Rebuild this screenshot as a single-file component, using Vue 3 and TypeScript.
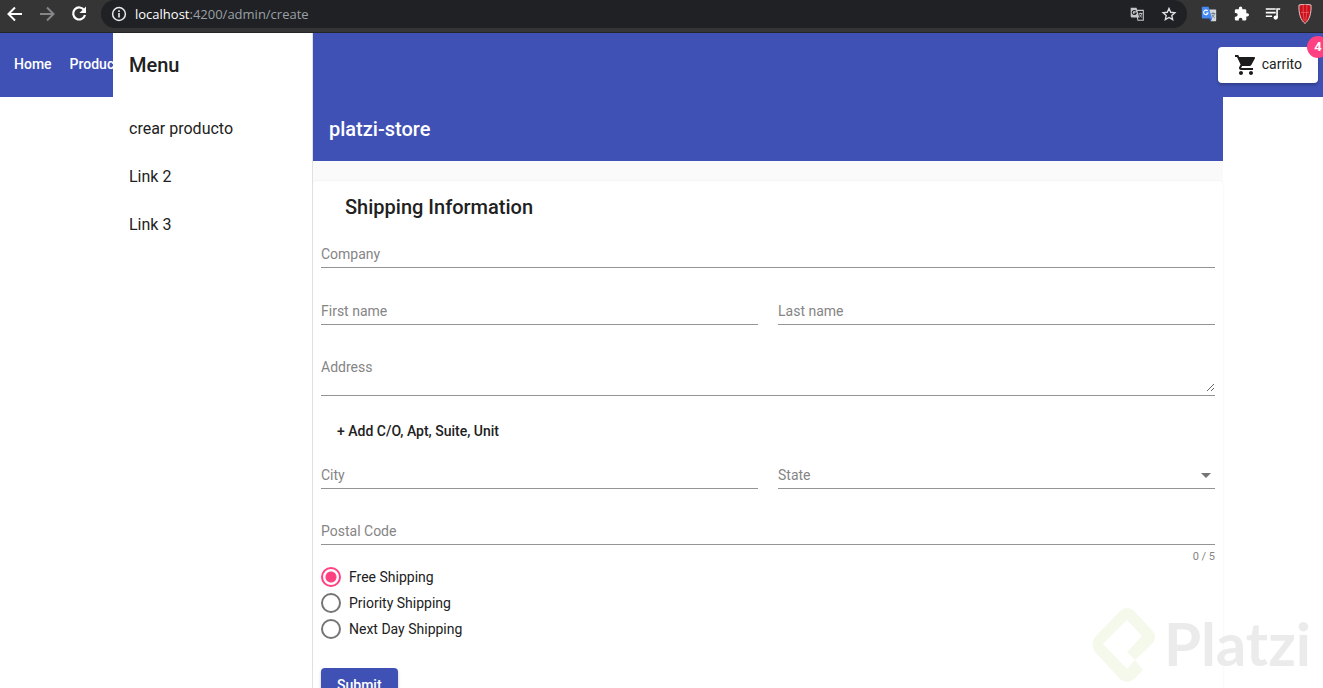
<script setup lang="ts">
import { ref } from 'vue'

interface LinkItem {
  label: string
  href: string
}

const navLinks: LinkItem[] = [
  { label: 'Home', href: '#/home' },
  { label: 'Products', href: '#/products' },
]
const menuLinks: LinkItem[] = [
  { label: 'crear producto', href: '#/admin/create' },
  { label: 'Link 2', href: '#/link-2' },
  { label: 'Link 3', href: '#/link-3' },
]
const shippingOptions: string[] = ['Free Shipping', 'Priority Shipping', 'Next Day Shipping']
const states: string[] = ['Alabama', 'Alaska', 'Arizona', 'California']

const company = ref('')
const firstName = ref('')
const lastName = ref('')
const address = ref('')
const city = ref('')
const state = ref('')
const postalCode = ref('')
const shipping = ref('Free Shipping')
const cartCount = ref(4)
</script>

<template>
  <div class="window">
    <div class="browser">
      <button class="tool" aria-label="Back">
        <svg viewBox="0 0 20 20"><path d="M17 10H4M10 3.500L3.500 10l6.500 6.500" fill="none" stroke="#fff" stroke-width="2" /></svg>
      </button>
      <button class="tool" aria-label="Forward">
        <svg viewBox="0 0 20 20"><path d="M3 10h13M10 3.500l6.500 6.500-6.500 6.500" fill="none" stroke="#85868a" stroke-width="2" /></svg>
      </button>
      <button class="tool" aria-label="Reload">
        <svg viewBox="0 0 20 20"><path d="M15.300 6.300A6 6 0 1 0 16 11" fill="none" stroke="#fff" stroke-width="2.200" /><path d="M17 2.500V9h-6.500z" fill="#fff" /></svg>
      </button>
      <div class="omnibox">
        <svg class="info" viewBox="0 0 16 16"><circle cx="8" cy="8" r="6.400" fill="none" stroke="#e8eaed" stroke-width="1.500" /><path d="M7.200 7h1.600v4.500H7.200zM7.200 4.300h1.600v1.600H7.200z" fill="#e8eaed" /></svg>
        <p class="url"><span>localhost</span>:4200/admin/create</p>
        <button class="tool" aria-label="Translate this page">
          <svg viewBox="0 0 20 20"><path d="M9 6h8v11h-6z" fill="none" stroke="#c4c7ca" stroke-width="1.200" /><path d="M3 3h6.500l3 11H4.500A1.500 1.500 0 0 1 3 12.500z" fill="#c4c7ca" /><path d="M8.800 6.900A2.300 2.300 0 1 0 9.200 9H7" fill="none" stroke="#202124" stroke-width="1.200" /><path d="M12 9.500h4M14 8.500v1M15.300 9.500c-.4 2-1.500 3.300-2.500 4M12.800 10.500c.5 1.500 1.500 2.500 2.700 3.300" fill="none" stroke="#c4c7ca" /></svg>
        </button>
        <button class="tool" aria-label="Bookmark this page">
          <svg viewBox="0 0 20 20"><path d="M10 3.800l1.900 4.300 4.700.5-3.500 3.100 1 4.600-4.100-2.400-4.100 2.400 1-4.600-3.500-3.100 4.700-.5z" fill="none" stroke="#dee1e6" stroke-width="1.500" /></svg>
        </button>
      </div>
      <div class="extensions">
        <button class="tool" aria-label="Translate">
          <svg viewBox="0 0 20 20"><path d="M9 5h8a1 1 0 0 1 1 1v11a1 1 0 0 1-1 1h-5z" fill="#d5d8dc" /><path d="M3 2h6.500l4 13H3a1 1 0 0 1-1-1V3a1 1 0 0 1 1-1z" fill="#4688f1" /><path d="M9.500 15h4L12 18z" fill="#2a56c6" /><path d="M8.600 6.700A2.500 2.500 0 1 0 9 8.800H6.800" fill="none" stroke="#fff" stroke-width="1.200" /><path d="M12.500 9.500h4.500M14.500 8v1.500M16 9.500c-.4 2-1.300 3.200-2.300 4M13.500 10.800c.6 1.500 1.600 2.700 3 3.700" fill="none" stroke="#607988" /></svg>
        </button>
        <button class="tool" aria-label="Extensions">
          <svg viewBox="0 0 24 24"><path d="M20.500 11H19V7a2 2 0 0 0-2-2h-4V3.500a2.500 2.500 0 0 0-5 0V5H4a2 2 0 0 0-2 2v3.800h1.500a2.700 2.700 0 0 1 0 5.400H2V20a2 2 0 0 0 2 2h3.800v-1.500a2.700 2.700 0 0 1 5.400 0V22H17a2 2 0 0 0 2-2v-4h1.500a2.500 2.500 0 0 0 0-5z" fill="#fff" transform="translate(2 1) scale(.9)" /></svg>
        </button>
        <button class="tool" aria-label="Media controls">
          <svg viewBox="0 0 20 20"><path d="M2 4.500h11M2 8.500h11M2 12.500h7M14.500 14V4.500H18" fill="none" stroke="#fff" stroke-width="1.800" /><circle cx="13" cy="14" r="2.400" fill="#fff" /></svg>
        </button>
        <button class="tool" aria-label="Shield">
          <svg class="shield" viewBox="0 0 20 20"><path d="M4 1Q10-1 16 1C16.500 9 14.500 16 10 19.500 5.500 16 3.500 9 4 1z" fill="#cc0f18" stroke="#dccaca" /><path d="M8.200 1v7l1 9M11.800 1v7l-1 9M6 8.500h8" fill="none" stroke="#e4616a" stroke-width=".8" /></svg>
        </button>
      </div>
    </div>

    <div class="app">
      <header class="topbar">
        <nav class="links" aria-label="Main">
          <a v-for="link in navLinks" :key="link.label" :href="link.href">{{ link.label }}</a>
        </nav>
        <button class="cart">
          <svg viewBox="0 0 24 24"><path d="M7 18c-1.100 0-1.990.9-1.990 2S5.900 22 7 22s2-.9 2-2-.9-2-2-2zM1 2v2h2l3.600 7.590-1.350 2.450c-.16.28-.25.61-.25.96 0 1.100.9 2 2 2h12v-2H7.420c-.14 0-.25-.11-.25-.25l.03-.12.900-1.630h7.450c.75 0 1.410-.41 1.750-1.030l3.580-6.490c.08-.14.120-.31.120-.48 0-.55-.45-1-1-1H5.210l-.94-2H1zm16 16c-1.100 0-1.990.9-1.990 2s.89 2 1.990 2 2-.9 2-2-.9-2-2-2z" fill="#1c1c1c" /></svg>
          <span class="cart-label">carrito</span>
          <span class="badge">{{ cartCount }}</span>
        </button>
      </header>

      <aside class="drawer">
        <h2>Menu</h2>
        <nav aria-label="Menu">
          <a v-for="link in menuLinks" :key="link.label" :href="link.href">{{ link.label }}</a>
        </nav>
      </aside>

      <main class="content">
        <h1>platzi-store</h1>
        <form class="card" @submit.prevent>
          <h2>Shipping Information</h2>
          <label class="field">
            <input v-model="company" type="text" />
            <span :class="{ floating: company }">Company</span>
          </label>
          <div class="pair">
            <label class="field">
              <input v-model="firstName" type="text" />
              <span :class="{ floating: firstName }">First name</span>
            </label>
            <label class="field">
              <input v-model="lastName" type="text" />
              <span :class="{ floating: lastName }">Last name</span>
            </label>
          </div>
          <label class="field area">
            <textarea v-model="address"></textarea>
            <span :class="{ floating: address }">Address</span>
          </label>
          <button type="button" class="add">+ Add C/O, Apt, Suite, Unit</button>
          <div class="pair">
            <label class="field">
              <input v-model="city" type="text" />
              <span :class="{ floating: city }">City</span>
            </label>
            <label class="field">
              <select v-model="state">
                <option value=""></option>
                <option v-for="name in states" :key="name" :value="name">{{ name }}</option>
              </select>
              <span :class="{ floating: state }">State</span>
              <i class="arrow"></i>
            </label>
          </div>
          <label class="field postal">
            <input v-model="postalCode" type="text" maxlength="5" />
            <span :class="{ floating: postalCode }">Postal Code</span>
          </label>
          <p class="hint">{{ postalCode.length }} / 5</p>
          <div class="radios" role="radiogroup" aria-label="Shipping method">
            <label v-for="option in shippingOptions" :key="option">
              <input v-model="shipping" type="radio" name="shipping" :value="option" />
              {{ option }}
            </label>
          </div>
          <button type="submit" class="submit">Submit</button>
        </form>
      </main>
    </div>

    <div class="brand">
      <svg viewBox="0 0 64 74"><path fill-rule="evenodd" d="M28 3Q35-3 42 3L60 22Q66 29 60 36L43 52 51 62 42 71Q35 77 28 71L3 44Q-2 37 3 29ZM35 12 11 36 35 61 43 52 35 44 50 28Z" /></svg>
      <span>Platzi</span>
    </div>
  </div>
</template>

<style>
body {
  margin: 0;
}
</style>

<style scoped>
* {
  box-sizing: border-box;
}

.window {
  position: relative;
  display: flex;
  flex-direction: column;
  height: 100vh;
  overflow: hidden;
  background: #fff;
  color: #212121;
  font: 400 14px/20px Roboto, "Liberation Sans", sans-serif;
}

button,
input,
select,
textarea {
  margin: 0;
  padding: 0;
  border: 0;
  background: none;
  color: inherit;
  font: inherit;
}

button {
  cursor: pointer;
}

a {
  color: inherit;
  text-decoration: none;
}

h1,
h2,
p {
  margin: 0;
}

/* Browser bar */
.browser {
  display: flex;
  flex: none;
  align-items: flex-start;
  gap: 12px;
  height: 33px;
  padding-left: 5px;
  border-bottom: 1px solid #242527;
  background: #353535;
}

.tool {
  display: flex;
  flex: none;
  align-items: center;
  justify-content: center;
  width: 20px;
  height: 28px;
}

.tool svg {
  width: 20px;
  height: 20px;
}

.omnibox {
  display: flex;
  flex: 1;
  align-items: center;
  height: 28px;
  gap: 12px;
  padding: 0 8px 0 10px;
  border-radius: 14px;
  background: #202124;
}

.info {
  width: 16px;
  height: 16px;
}

.url {
  flex: 1;
  margin-left: -4px;
  color: #9aa0a6;
  font: 400 13px/20px "Open Sans", "Noto Sans", sans-serif;
}

.url span {
  color: #fff;
}

.extensions {
  display: flex;
  gap: 12px;
  padding-right: 8px;
}

.omnibox .tool svg,
.extensions .tool svg {
  width: 18px;
  height: 18px;
}

.extensions .tool .shield {
  width: 20px;
  height: 20px;
}

/* Application shell */
.app {
  display: grid;
  flex: 1;
  grid-template-rows: 64px 1fr;
  grid-template-columns: 113px 200px 1fr 100px;
}

.topbar {
  display: flex;
  grid-row: 1;
  grid-column: 1 / -1;
  align-items: center;
  justify-content: space-between;
  padding: 0 5px 0 14px;
  background: #3f51b5;
}

.links {
  display: flex;
  gap: 18px;
  padding-bottom: 2px;
  color: #fff;
  font-weight: 500;
}

.cart {
  position: relative;
  display: flex;
  align-items: center;
  gap: 4px;
  height: 36px;
  padding: 0 16px;
  border-radius: 4px;
  background: #fff;
  box-shadow: 0 2px 3px rgba(0, 0, 0, 0.25);
}

.cart svg {
  width: 24px;
  height: 24px;
}

.cart-label {
  padding-bottom: 2px;
}

.badge {
  position: absolute;
  top: -11px;
  right: -11px;
  width: 22px;
  height: 22px;
  border-radius: 50%;
  background: #ff4081;
  color: #fff;
  font-size: 13px;
  font-weight: 700;
  line-height: 22px;
  text-align: center;
}

.drawer {
  z-index: 1;
  grid-row: 1 / -1;
  grid-column: 2;
  border-right: 1px solid #e0e0e0;
  background: #fff;
}

.drawer h2 {
  height: 64px;
  padding-left: 16px;
  font-size: 20px;
  font-weight: 500;
  line-height: 64px;
}

.drawer nav {
  padding-top: 8px;
}

.drawer a {
  display: block;
  padding: 0 16px;
  font-size: 16px;
  line-height: 48px;
}

.content {
  grid-row: 2;
  grid-column: 3;
  min-width: 0;
  background: #fafafa;
}

.content h1 {
  height: 64px;
  padding-left: 16px;
  background: #3f51b5;
  color: #fff;
  font-size: 20px;
  font-weight: 500;
  line-height: 64px;
}

/* Shipping form */
.card {
  display: flex;
  flex-direction: column;
  margin-top: 20px;
  padding: 10px 8px;
  border-radius: 4px;
  background: #fff;
  box-shadow: 0 0 2px rgba(0, 0, 0, 0.08);
}

.card h2 {
  padding-left: 24px;
  margin-bottom: 21px;
  font-size: 20px;
  font-weight: 500;
  line-height: 32px;
}

.field {
  display: grid;
  height: 24px;
  margin-bottom: 33px;
  border-bottom: 1px solid #949494;
}

.field > * {
  grid-area: 1 / 1;
  min-width: 0;
}

.field input,
.field select {
  height: 23px;
  outline: 0;
  appearance: none;
}

.field span {
  height: 20px;
  color: #858585;
  pointer-events: none;
}

.field input:focus + span,
.field textarea:focus + span,
.field select:focus + span {
  color: #3f51b5;
}

.field :focus + span,
.field .floating {
  font-size: 10px;
  transform: translateY(-16px);
}

.pair {
  display: grid;
  grid-template-columns: 1fr 1fr;
  gap: 20px;
}

.pair .field {
  margin-bottom: 32px;
}

.area {
  height: 39px;
  margin-bottom: 17px;
}

.area textarea {
  height: 35px;
  outline: 0;
  resize: vertical;
}

.add {
  align-self: flex-start;
  height: 36px;
  margin-bottom: 16px;
  padding: 0 16px;
  font-weight: 500;
}

.arrow {
  margin: 8px 4px 0 0;
  justify-self: end;
  align-self: start;
  border: 5px solid transparent;
  border-top-color: #757575;
  border-bottom: 0;
  pointer-events: none;
}

.postal {
  margin-bottom: 4px;
}

.hint {
  color: #858585;
  font-size: 11px;
  line-height: 16px;
  text-align: right;
}

.radios {
  display: grid;
  gap: 6px;
  justify-items: start;
  margin-top: 2px;
}

.radios label {
  display: flex;
  gap: 8px;
  align-items: center;
}

.radios input {
  width: 20px;
  height: 20px;
  border: 2px solid #757575;
  border-radius: 50%;
  appearance: none;
}

.radios input:checked {
  border-color: #ff4081;
  background: radial-gradient(circle, #ff4081 5px, transparent 6px);
}

.submit {
  align-self: flex-start;
  height: 36px;
  margin-top: 29px;
  padding: 0 16px 2px;
  border-radius: 4px;
  background: #3f51b5;
  box-shadow: 0 2px 3px rgba(0, 0, 0, 0.25);
  color: #fff;
  font-weight: 500;
}

.brand {
  position: absolute;
  right: 12px;
  bottom: 6px;
  display: flex;
  align-items: flex-start;
  gap: 8px;
  color: #ebebeb;
  font: 700 60px/70px Lato, sans-serif;
  pointer-events: none;
}

.brand svg {
  width: 64px;
  height: 74px;
  fill: #f5f9eb;
}
</style>
